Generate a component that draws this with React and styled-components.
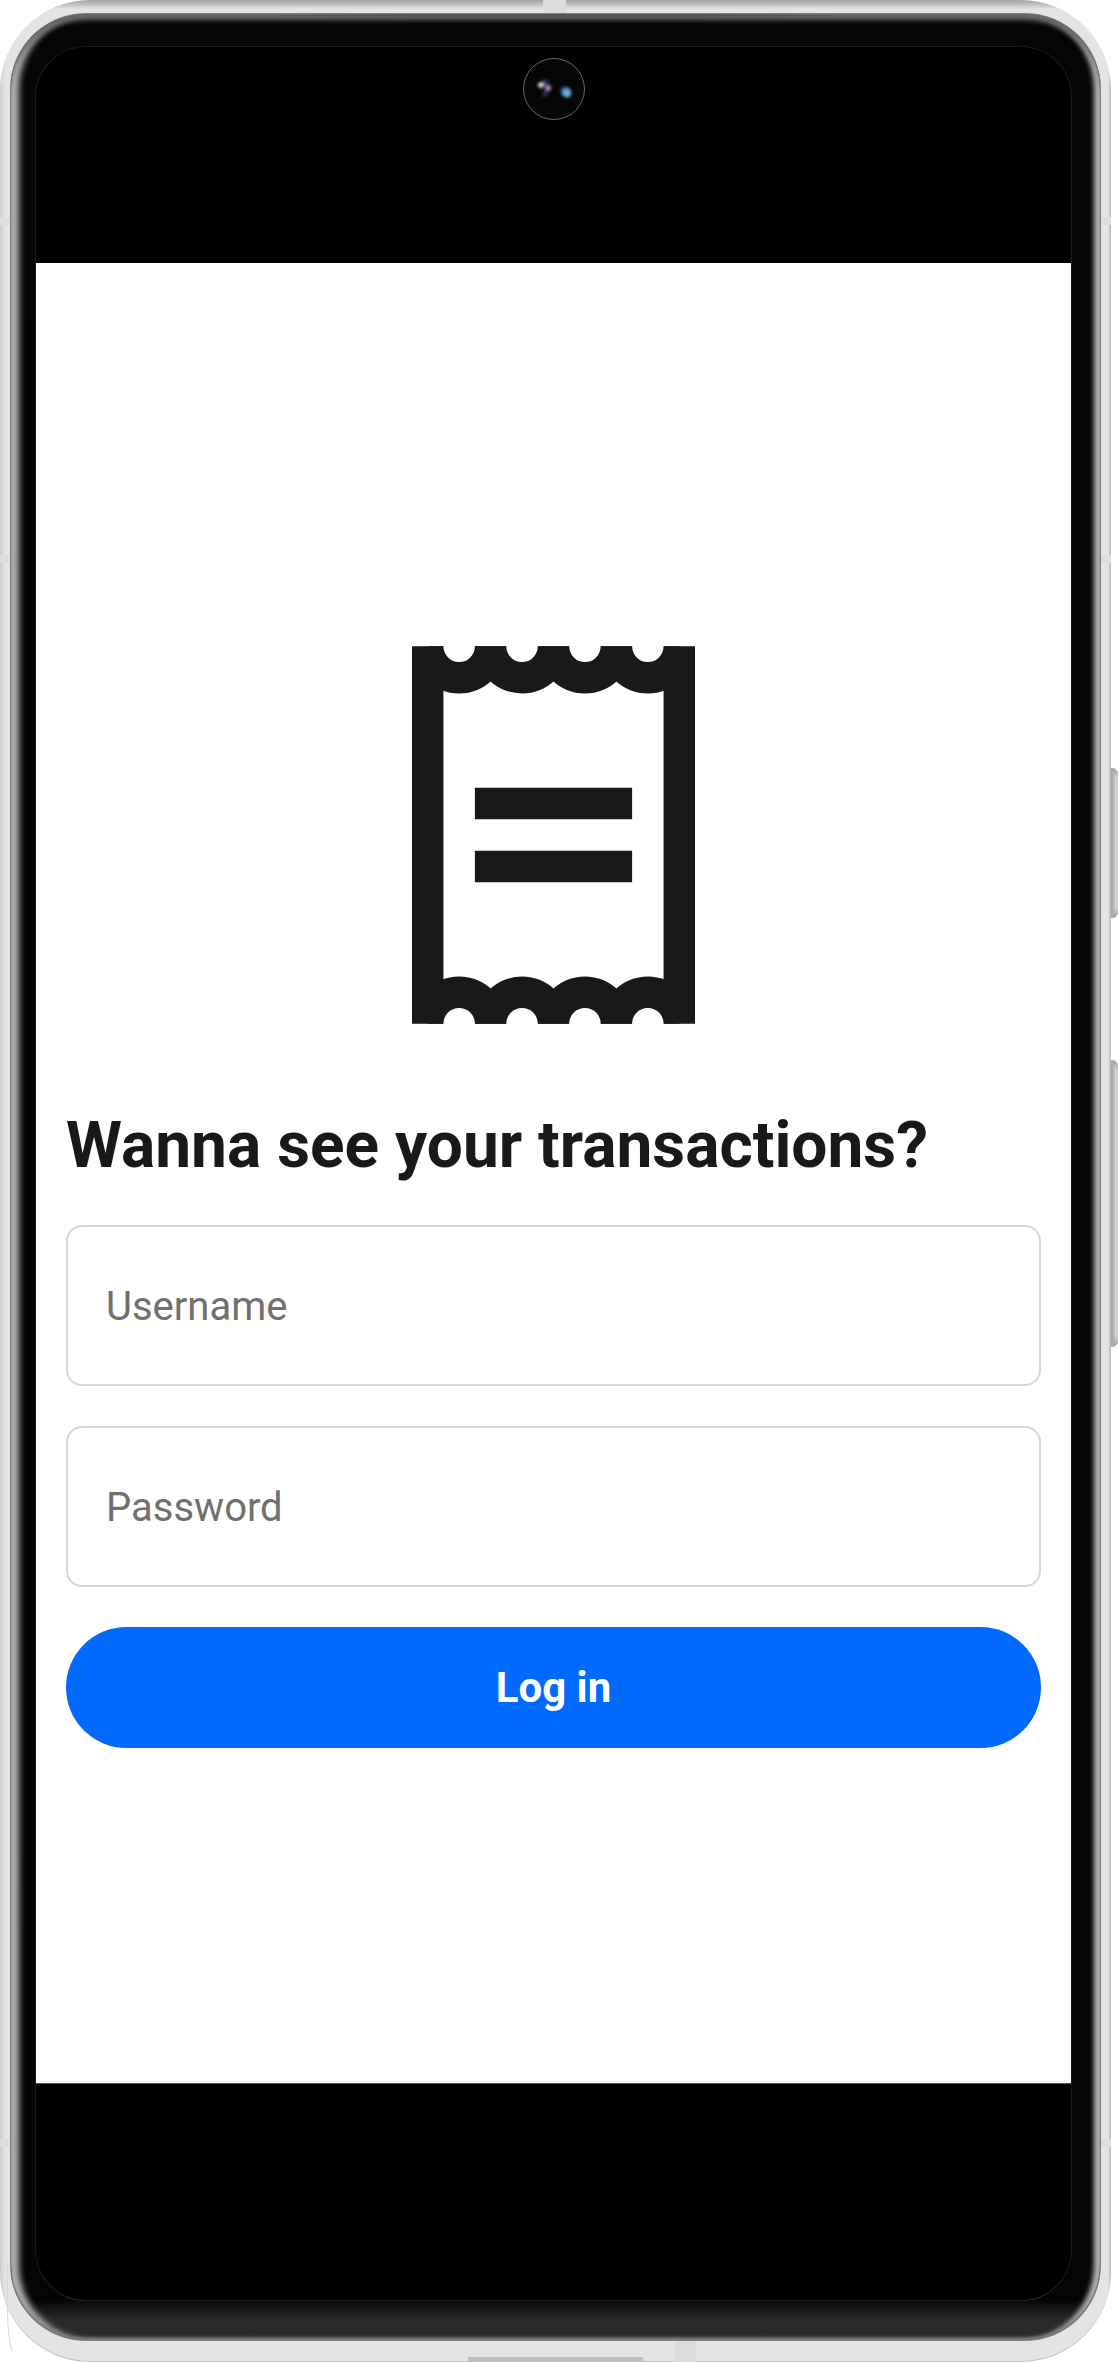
import React from "react";
import styled, { createGlobalStyle } from "styled-components";

const GlobalStyle = createGlobalStyle`
  *, *::before, *::after { box-sizing: border-box; }
  body { margin: 0; background: #fff; font-family: Roboto, "Liberation Sans", sans-serif; }
`;

const Page = styled.div`
  display: flex;
  min-height: 100vh;
  padding-right: 7px;
`;

const Body = styled.div`
  position: relative;
  flex: 1;
  display: flex;
  min-width: 0;
  padding: 13px 10px 21px;
  border-radius: 90px;
  background:
    linear-gradient(180deg, #a5a5a3 0, #b5b5b3 3px, #e4e4e2 9px, rgba(228, 228, 226, 0) 90px) top / 100% 90px no-repeat,
    linear-gradient(90deg, #cbcbc9 0, #dcdcda 3px, #e4e4e2 6px, #e4e4e2 calc(100% - 3px), #b4b4b2 100%);
  box-shadow: inset 0 -1px 0 #bcbcba;
`;

const Glass = styled.div`
  flex: 1;
  display: flex;
  min-width: 0;
  padding: 33px 29px 40px 25px;
  border: 1px solid #80807f;
  border-radius: 76px;
  background: linear-gradient(0deg, #2b2b2b 0, #2a2a2a 20px, #050505 40px, #060606 100%);
  box-shadow:
    inset 0 8px 5px -2px #6a6866,
    inset 0 -3px 3px -1px #777,
    inset 9px 0 6px -1px #b3b3b3,
    inset -7px 0 5px -1px #b9b7b9;
`;

const Screen = styled.div`
  flex: 1;
  display: flex;
  flex-direction: column;
  min-width: 0;
  overflow: hidden;
  border-radius: 50px;
  background: #000;
  box-shadow: 0 0 0 1px #1c1c1c, 0 1px 0 #5a5a5a;
`;

const StatusArea = styled.div`
  display: flex;
  justify-content: center;
  height: 216px;
  padding-top: 11px;
`;

const NavigationArea = styled.div`
  height: 217px;
  border-top: 1px solid #555;
`;

const Content = styled.main`
  flex: 1;
  display: flex;
  flex-direction: column;
  padding: 383px 30px 80px 30px;
  background: #fff;
`;

const Ticket = styled.svg`
  display: block;
  width: 283px;
  height: 378px;
  margin: 0 auto;
`;

const Title = styled.h1`
  margin: 86px 0 43px;
  color: #191919;
  font-size: 64px;
  line-height: 72px;
  font-weight: 700;
`;

const Form = styled.form`
  display: flex;
  flex-direction: column;
  gap: 40px;
`;

const Field = styled.input`
  width: 100%;
  height: 161px;
  padding: 2px 38px 0;
  border: 2px solid #d6d6d6;
  border-radius: 16px;
  background: #fff;
  color: #191919;
  font: 400 40px/48px Roboto, "Liberation Sans", sans-serif;
  &::placeholder { color: #707070; opacity: 1; }
`;

const SubmitButton = styled.button`
  width: 100%;
  height: 121px;
  padding: 0;
  border: 0;
  border-radius: 61px;
  background: #006aff;
  color: #fff;
  font: 700 42px/48px Roboto, "Liberation Sans", sans-serif;
`;

const Antenna = styled.span`
  position: absolute;
  ${({ $side }) => $side}: 0;
  top: ${({ $top }) => $top}px;
  width: 10px;
  height: 8px;
  background: #dededf;
`;

const TopAntenna = styled.span`
  position: absolute;
  top: 0;
  left: calc(50% - 13px);
  width: 23px;
  height: 13px;
  background: #dcdcdc;
`;

const BottomAntenna = styled(TopAntenna)`
  top: auto;
  bottom: 0;
  left: calc(50% + 119px);
  width: 21px;
  height: 21px;
`;

const Port = styled(TopAntenna)`
  top: auto;
  bottom: 1px;
  left: calc(50% - 88px);
  width: 175px;
  height: 4px;
  background: #bebebe;
`;

const Earpiece = styled(TopAntenna)`
  top: 14px;
  left: 25%;
  width: 50%;
  height: 3px;
  border-radius: 50%;
  background: #5c5551;
`;

const SideButton = styled.span`
  position: absolute;
  left: 100%;
  top: ${({ $top }) => $top}px;
  width: 7px;
  height: ${({ $height }) => $height}px;
  border-radius: 0 6px 6px 0;
  background: linear-gradient(90deg, #a4a4a3 0, #b2b2b1 2px, #d9d9d8 5px, #dededc 100%);
  box-shadow: inset 0 8px 5px -3px #aaa, inset 0 -8px 5px -3px #aaa;
`;

const Reflection = styled.svg`
  position: absolute;
  left: 6px;
  bottom: 10px;
  width: 8px;
  height: 90px;
`;

const Lens = styled.svg`
  display: block;
  width: 62px;
  height: 62px;
`;

const ANTENNAS = [217, 555, 2139];
const HOLES = [3, 7, 11, 15];

function Camera() {
  return (
    <Lens viewBox="0 0 62 62" aria-hidden="true">
      <defs>
        <filter id="soft" x="-50%" y="-50%" width="200%" height="200%">
          <feGaussianBlur stdDeviation="1.6" />
        </filter>
      </defs>
      <circle cx="31" cy="31" r="30.5" fill="#060606" stroke="#666" />
      <g filter="url(#soft)">
        <circle cx="23" cy="24" r="3" fill="#172f61" />
        <circle cx="22" cy="36" r="3" fill="#173161" />
        <circle cx="18" cy="27" r="3" fill="#c7d5cb" />
        <circle cx="25" cy="30" r="3" fill="#a596af" />
        <circle cx="42" cy="33" r="5" fill="#173e78" />
        <circle cx="44" cy="35" r="4.5" fill="#6ba9d0" />
      </g>
    </Lens>
  );
}

function TicketIcon() {
  return (
    <Ticket viewBox="0 0 18 24" aria-hidden="true">
      <defs>
        <clipPath id="paper"><path d="M1 0h16v24H1z" /></clipPath>
      </defs>
      <path fill="#191919" d="M0 0h2v24H0zM16 0h2v24h-2zM4 9h10v2H4zM4 13h10v2H4z" />
      <g clipPath="url(#paper)" fill="#191919">
        {HOLES.map((x) => (
          <React.Fragment key={x}>
            <circle cx={x} cy="0" r="3" />
            <circle cx={x} cy="24" r="3" />
          </React.Fragment>
        ))}
      </g>
      <g fill="#fff">
        {HOLES.map((x) => (
          <React.Fragment key={x}>
            <circle cx={x} cy="0" r="1" />
            <circle cx={x} cy="24" r="1" />
          </React.Fragment>
        ))}
      </g>
    </Ticket>
  );
}

export default function App() {
  return (
    <>
      <GlobalStyle />
      <Page>
        <Body>
          <Glass>
            <Screen>
              <StatusArea><Camera /></StatusArea>
              <Content>
                <TicketIcon />
                <Title>Wanna see your transactions?</Title>
                <Form onSubmit={(event) => event.preventDefault()}>
                  <Field type="text" name="username" placeholder="Username" aria-label="Username" />
                  <Field type="password" name="password" placeholder="Password" aria-label="Password" />
                  <SubmitButton type="submit">Log in</SubmitButton>
                </Form>
              </Content>
              <NavigationArea />
            </Screen>
          </Glass>
          {ANTENNAS.map((top) => (
            <React.Fragment key={top}>
              <Antenna $side="left" $top={top} />
              <Antenna $side="right" $top={top} />
            </React.Fragment>
          ))}
          <TopAntenna />
          <Earpiece />
          <BottomAntenna />
          <Port />
          <SideButton $top={768} $height={150} />
          <SideButton $top={1060} $height={287} />
          <Reflection viewBox="0 0 8 90" aria-hidden="true">
            <path d="M1.500 0V50Q2 76 6 89" fill="none" stroke="#d8d8d8" />
          </Reflection>
        </Body>
      </Page>
    </>
  );
}
